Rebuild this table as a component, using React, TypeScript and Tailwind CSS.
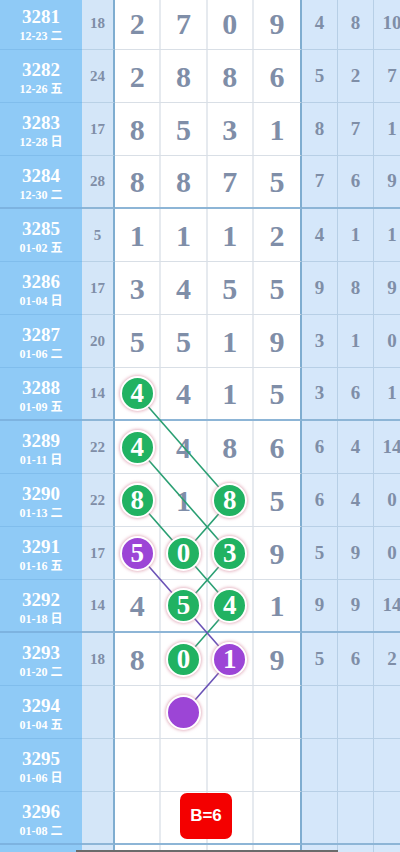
import type { ReactNode } from "react";

type Row = {
  no?: number;
  date?: string;
  sum?: number;
  digits?: number[];
  tail?: number[];
};

const rows: Row[] = [
  { no: 3281, date: "12-23 二", sum: 18, digits: [2, 7, 0, 9], tail: [4, 8, 10] },
  { no: 3282, date: "12-26 五", sum: 24, digits: [2, 8, 8, 6], tail: [5, 2, 7] },
  { no: 3283, date: "12-28 日", sum: 17, digits: [8, 5, 3, 1], tail: [8, 7, 1] },
  { no: 3284, date: "12-30 二", sum: 28, digits: [8, 8, 7, 5], tail: [7, 6, 9] },
  { no: 3285, date: "01-02 五", sum: 5, digits: [1, 1, 1, 2], tail: [4, 1, 1] },
  { no: 3286, date: "01-04 日", sum: 17, digits: [3, 4, 5, 5], tail: [9, 8, 9] },
  { no: 3287, date: "01-06 二", sum: 20, digits: [5, 5, 1, 9], tail: [3, 1, 0] },
  { no: 3288, date: "01-09 五", sum: 14, digits: [4, 4, 1, 5], tail: [3, 6, 1] },
  { no: 3289, date: "01-11 日", sum: 22, digits: [4, 4, 8, 6], tail: [6, 4, 14] },
  { no: 3290, date: "01-13 二", sum: 22, digits: [8, 1, 8, 5], tail: [6, 4, 0] },
  { no: 3291, date: "01-16 五", sum: 17, digits: [5, 0, 3, 9], tail: [5, 9, 0] },
  { no: 3292, date: "01-18 日", sum: 14, digits: [4, 5, 4, 1], tail: [9, 9, 14] },
  { no: 3293, date: "01-20 二", sum: 18, digits: [8, 0, 1, 9], tail: [5, 6, 2] },
  { no: 3294, date: "01-04 五" },
  { no: 3295, date: "01-06 日" },
  { no: 3296, date: "01-08 二" },
  {},
];

// balls: "row-col" -> colour
const balls: Record<string, "g" | "p"> = {
  "7-0": "g",
  "8-0": "g",
  "9-0": "g",
  "9-2": "g",
  "10-0": "p",
  "10-1": "g",
  "10-2": "g",
  "11-1": "g",
  "11-2": "g",
  "12-1": "g",
  "12-2": "p",
  "13-1": "p",
};

const colX = [137.5, 184, 230.5, 277];
const rowY = (i: number) => -3 + i * 53 + 26.5;

const greenLines: [number, number, number, number][] = [
  [7, 0, 9, 2],
  [8, 0, 10, 2],
  [9, 0, 10, 1],
  [9, 2, 10, 1],
  [10, 1, 11, 2],
  [10, 2, 11, 1],
  [11, 2, 12, 1],
];
const purpleLines: [number, number, number, number][] = [
  [10, 0, 12, 2],
  [12, 2, 13, 1],
];

const serif = "font-['Liberation_Serif','Noto_Sans_CJK_SC',serif]";

const Ball = ({ color, children }: { color: "g" | "p"; children?: ReactNode }) => (
  <div
    className={`relative z-10 flex h-[35px] w-[35px] items-center justify-center rounded-full border-2 border-white shadow-[0_0_3px_1px_rgba(214,140,160,0.6)] ${
      color === "g" ? "bg-[#21b262]" : "bg-[#9c45d6]"
    }`}
  >
    <span className={`${serif} text-[27px] font-bold leading-none text-white`}>{children}</span>
  </div>
);

export default function App() {
  return (
    <div className="relative h-[852px] w-[400px] overflow-hidden bg-white">
      <div className="-mt-[3px] flex w-[410px] flex-col">
        {rows.map((r, i) => {
          const group = i % 4 === 3;
          const rowBorder = group ? "border-b-2 border-[#8db5d6]" : "border-b border-[#d9dfe6]";
          return (
            <div key={i} className="flex h-[53px] shrink-0">
              {/* Issue no + date */}
              <div
                className={`flex w-[82px] shrink-0 flex-col items-center justify-center bg-[#8fcaf6] pt-[4px] text-white ${serif} ${
                  group ? "border-b-2 border-[#7db3e0]" : "border-b border-[#80bdec]"
                }`}
              >
                <span className="text-[19px] font-bold leading-[20px]">{r.no}</span>
                <span className="mt-[2px] text-[12px] font-bold leading-[14px]">{r.date}</span>
              </div>

              {/* Sum */}
              <div
                className={`flex w-[33px] shrink-0 items-center justify-center border-r-2 border-r-[#7fadd0] bg-[#d4e6f8] ${serif} text-[15px] font-bold text-[#7f8ea7] ${
                  group ? "border-b-2 border-b-[#8db5d6]" : "border-b border-b-[#b9d1e6]"
                }`}
              >
                {r.sum}
              </div>

              {/* Digits */}
              <div className={`grid w-[187px] shrink-0 grid-cols-4 border-r-2 border-r-[#7fadd0] ${rowBorder}`}>
                {[0, 1, 2, 3].map((c) => {
                  const b = balls[`${i}-${c}`];
                  return (
                    <div
                      key={c}
                      className={`flex items-center justify-center ${c < 3 ? "border-r-2 border-[#e6eaef]" : ""}`}
                    >
                      {b ? (
                        <Ball color={b}>{r.digits?.[c]}</Ball>
                      ) : (
                        <span className={`${serif} text-[30px] font-bold text-[#7f8ea8]`}>
                          {r.digits?.[c]}
                        </span>
                      )}
                    </div>
                  );
                })}
              </div>

              {/* Tail */}
              <div
                className={`grid w-[108px] shrink-0 grid-cols-3 bg-[#d5e7fa] ${
                  group ? "border-b-2 border-[#8db5d6]" : "border-b border-[#b7cfe6]"
                }`}
              >
                {[0, 1, 2].map((c) => (
                  <div
                    key={c}
                    className={`flex items-center justify-center ${serif} text-[19px] font-bold text-[#7f8ea7] ${
                      c < 2 ? "border-r border-[#b7cfe6]" : ""
                    }`}
                  >
                    {r.tail?.[c]}
                  </div>
                ))}
              </div>
            </div>
          );
        })}
      </div>

      {/* trend lines */}
      <svg className="pointer-events-none absolute left-0 top-0 z-[5]" width="400" height="852">
        {greenLines.map(([r1, c1, r2, c2], k) => (
          <line
            key={`g${k}`}
            x1={colX[c1]}
            y1={rowY(r1)}
            x2={colX[c2]}
            y2={rowY(r2)}
            stroke="#2a9f73"
            strokeWidth="1.6"
          />
        ))}
        {purpleLines.map(([r1, c1, r2, c2], k) => (
          <line
            key={`p${k}`}
            x1={colX[c1]}
            y1={rowY(r1)}
            x2={colX[c2]}
            y2={rowY(r2)}
            stroke="#6a52b6"
            strokeWidth="1.6"
          />
        ))}
      </svg>

      {/* B=6 badge */}
      <div className="absolute left-[180px] top-[793px] z-10 flex h-[46px] w-[52px] items-center justify-center rounded-[7px] bg-[#f40000] font-['Liberation_Sans',Arial,sans-serif] text-[17px] font-bold text-white">
        B=6
      </div>

      {/* scrollbar thumb */}
      <div className="absolute bottom-0 left-[76px] h-[2px] w-[262px] bg-[#6b6b6b]" />
    </div>
  );
}
